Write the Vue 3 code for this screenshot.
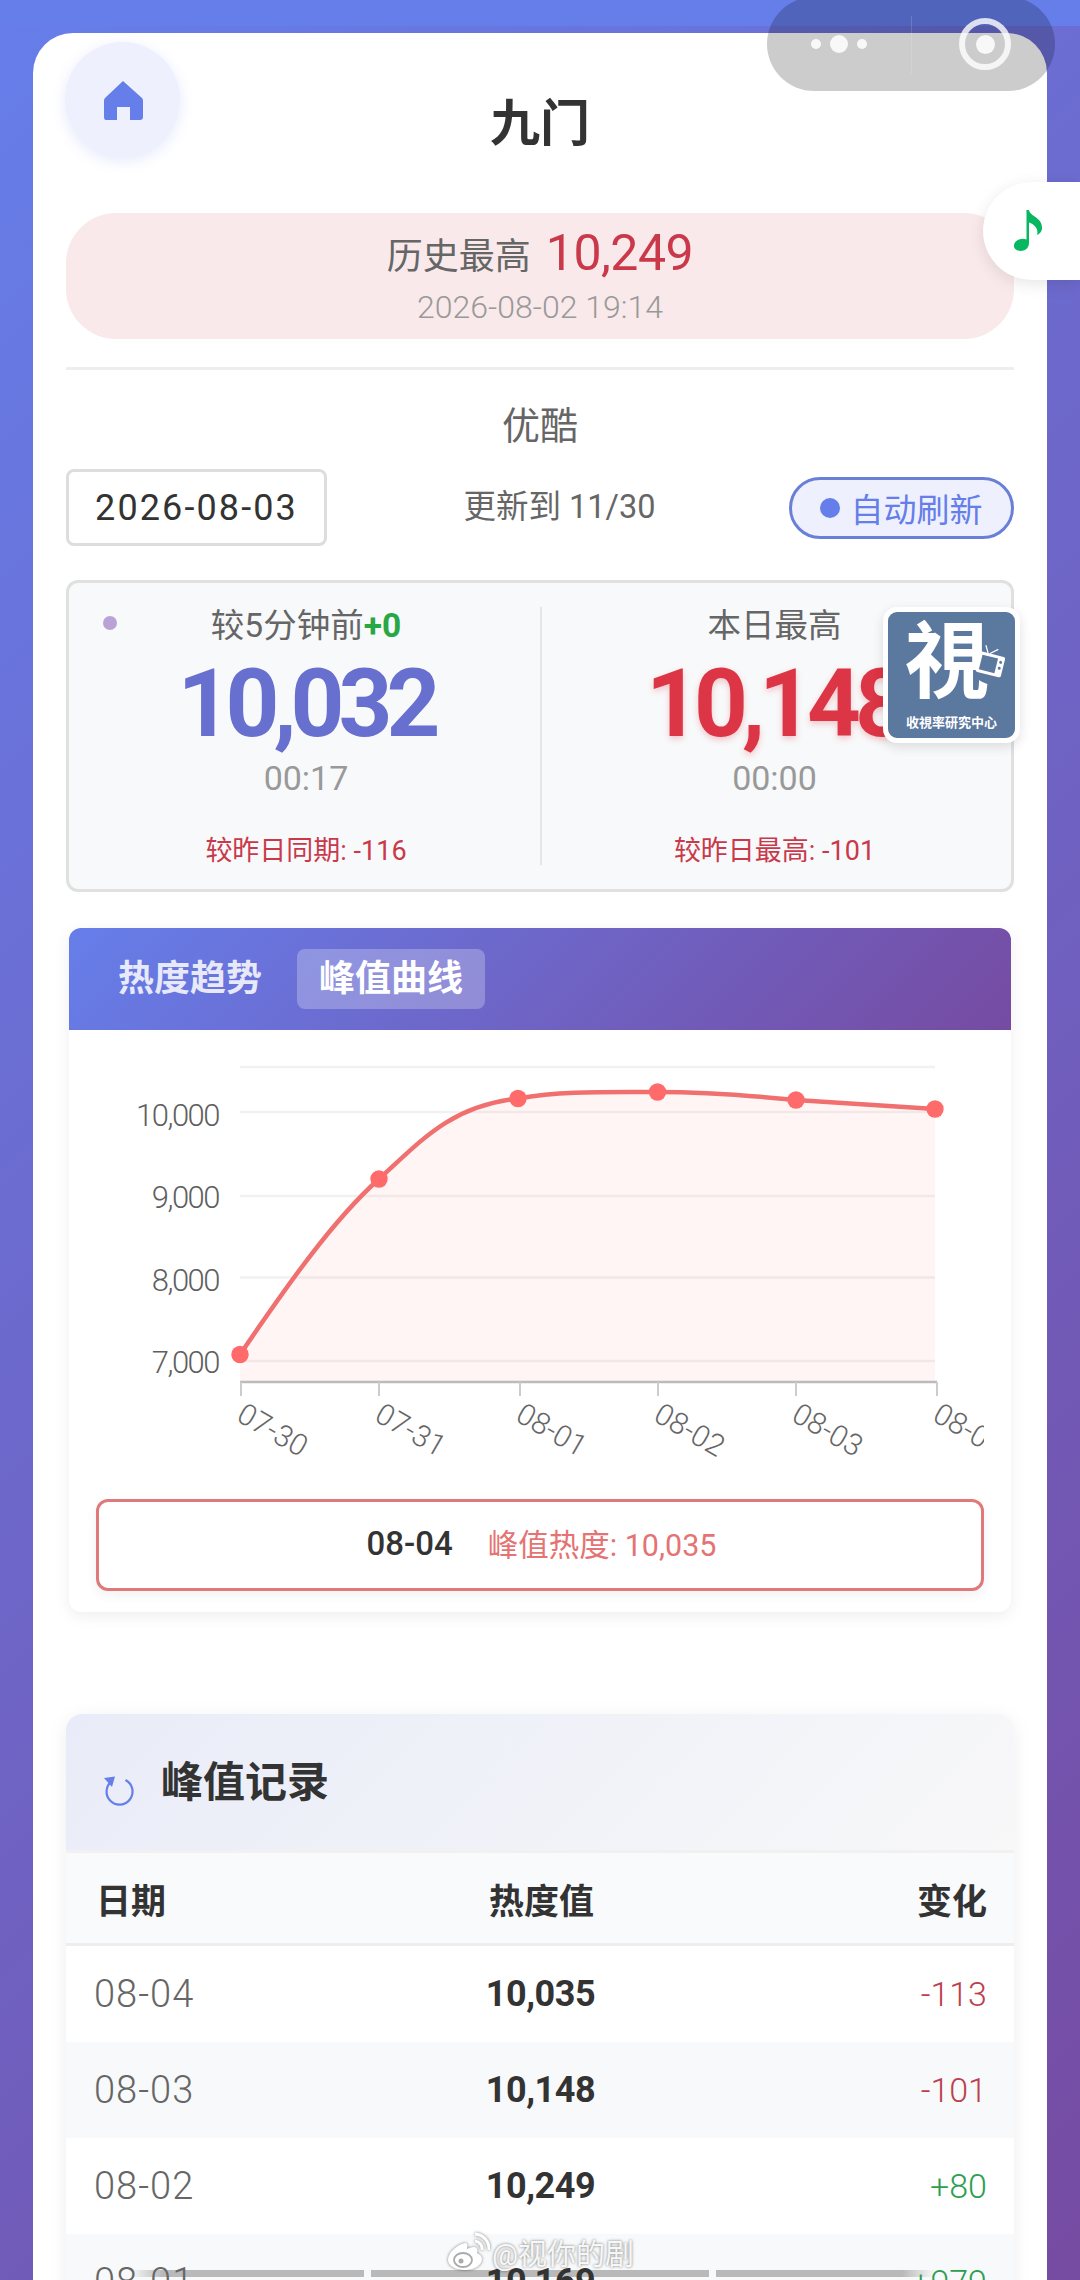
<template>
  <div class="page">
    <!-- top status strip + wechat capsule -->
    <div class="top-strip"></div>
    <div class="capsule">
      <div class="capsule-dots"><i></i><i class="big"></i><i></i></div>
      <div class="capsule-line"></div>
      <div class="capsule-ring"><i></i></div>
    </div>

    <div class="music-btn">
      <svg width="34" height="44" viewBox="0 0 34 44">
        <path d="M15.500 1 L18 1 C19 8 32 8 31 20 C30.500 23 28.500 25 26 26 C27.500 21 25 16 18 13.500 L18 34 C18 39 14 42 9.500 42 C5 42 2.500 39.500 3 36 C3.500 31.500 10 28.500 15.500 30.500 Z" fill="#07b860" />
      </svg>
    </div>

    <div class="main-card">
      <!-- Header -->
      <div class="header">
        <div class="home-btn">
          <svg width="40" height="40" viewBox="0 0 40 40">
            <path d="M20 1 L39 18 Q40 19 40 21 V37 Q40 40 37 40 H27 V27 H14 V40 H3 Q1 40 1 37 V21 Q1 19 2 18 Z" fill="#667eea" />
          </svg>
        </div>
        <h1 class="title">九门</h1>
      </div>

      <!-- All time high -->
      <div class="record-banner">
        <div class="record-line">
          <span class="record-label">历史最高</span>
          <span class="record-value">10,249</span>
        </div>
        <div class="record-time">2026-08-02 19:14</div>
      </div>

      <div class="divider"></div>
      <div class="platform">优酷</div>

      <div class="controls">
        <div class="date-box">2026-08-03</div>
        <div class="update-text">更新到 11/30</div>
        <div class="auto-btn"><i class="auto-dot"></i>自动刷新</div>
      </div>

      <!-- Stats -->
      <div class="stats-card">
        <i class="live-dot"></i>
        <div class="stat-col first">
          <div class="stat-label">较5分钟前<b class="up">+0</b></div>
          <div class="stat-num blue">10,032</div>
          <div class="stat-time">00:17</div>
          <div class="stat-diff">较昨日同期: -116</div>
        </div>
        <div class="stat-col left-line">
          <div class="stat-label">本日最高</div>
          <div class="stat-num red">10,148</div>
          <div class="stat-time">00:00</div>
          <div class="stat-diff">较昨日最高: -101</div>
        </div>
      </div>

      <!-- Chart -->
      <div class="chart-card">
        <div class="chart-tabs">
          <span class="tab">热度趋势</span>
          <span class="tab active">峰值曲线</span>
        </div>
        <div class="chart-body">
          <svg class="chart" width="888" height="440" viewBox="96 1040 888 440">
            <line v-for="y in gridY" :key="y" x1="240" x2="935" :y1="y" :y2="y" stroke="#f1f1f1" stroke-width="2.500" />
            <path :d="linePath + ' L935 1382 L240 1382 Z'" fill="#ff6b6b" fill-opacity="0.07" />
            <line x1="240" x2="937" y1="1382" y2="1382" stroke="#bbb" stroke-width="2.500" />
            <line v-for="t in ticks" :key="t" :x1="t" :x2="t" y1="1382" y2="1396" stroke="#ccc" stroke-width="2" />
            <path :d="linePath" fill="none" stroke="#f07070" stroke-width="4.500" />
            <circle v-for="p in points" :key="p[0]" :cx="p[0]" :cy="p[1]" r="8.700" fill="#ff6b6b" />
            <text v-for="l in yLabels" :key="l.text" x="219" :y="l.y" text-anchor="end" class="axis-y">{{ l.text }}</text>
            <text
              v-for="(l, i) in xLabels"
              :key="l"
              :x="ticks[i] - 6"
              y="1420"
              :transform="`rotate(30 ${ticks[i] - 6} 1420)`"
              class="axis-x"
            >{{ l }}</text>
          </svg>
          <div class="peak-box">
            <span class="peak-date">08-04</span>
            <span class="peak-value">峰值热度: 10,035</span>
          </div>
        </div>
      </div>

      <!-- Records -->
      <div class="records-card">
        <div class="records-head">
          <svg class="refresh-icon" width="32" height="32" viewBox="0 0 32 32">
            <path d="M22.500 5 A13 13 0 1 1 9 6" fill="none" stroke="#667eea" stroke-width="2.200" />
            <path d="M1 3 L12 1.500 L9 12 Z" fill="#667eea" />
          </svg>
          <h2>峰值记录</h2>
        </div>
        <div class="table-row table-head">
          <span>日期</span>
          <span class="center">热度值</span>
          <span class="right">变化</span>
        </div>
        <div v-for="r in rows" :key="r.date" class="table-row">
          <span class="cell-date">{{ r.date }}</span>
          <span class="center cell-value">{{ r.value }}</span>
          <span class="right cell-change" :class="r.change.startsWith('+') ? 'green' : 'dark-red'">{{ r.change }}</span>
          <div v-if="r.date === '08-01'" class="video-bar">
            <i class="seg fade-left"></i>
            <i class="seg mid"></i>
            <i class="seg fade-right"></i>
          </div>
        </div>
      </div>
    </div>

    <!-- station logo floating over stats -->
    <div class="logo">
      <span class="logo-char">視</span>
      <svg class="logo-tv" width="32" height="34" viewBox="0 0 32 34">
        <path d="M11 9 L7 2 M13 9 L20 3" stroke="#fff" stroke-width="1.200" />
        <rect x="3" y="9" width="26" height="21" rx="2" fill="#fff" />
        <rect x="6" y="12" width="16" height="15" fill="#5b789f" />
        <circle cx="25.500" cy="15" r="1.500" fill="#5b789f" />
        <circle cx="25.500" cy="21" r="1.500" fill="#5b789f" />
      </svg>
      <span class="logo-text">收視率研究中心</span>
    </div>

    <!-- watermark -->
    <div class="mark">
      <svg class="mark-icon" width="44" height="40" viewBox="0 0 44 40">
        <path d="M19 11 C10 13 2 21 2 28 C2 34 10 38 19 38 C29 38 36 33 36 27 C36 23 32 22 31 21 C32 18 31 15 28 15 C25 15 23 16 21 17 C22 13 21 11 19 11 Z" fill="#fff" />
        <ellipse cx="17" cy="28" rx="9" ry="7" fill="none" stroke="#aaa" stroke-width="1.800" />
        <circle cx="15" cy="29" r="2.500" fill="#aaa" />
        <path d="M29 9 A8 8 0 0 1 36 18 M29 2 A15 15 0 0 1 43 18" fill="none" stroke="#fff" stroke-width="3" />
      </svg>
      <span>@视你的剧</span>
    </div>
  </div>
</template>

<script setup>
const gridY = [1067, 1112, 1196, 1277.5, 1361]
const ticks = [241, 379, 520, 658, 796, 937]
const points = [[240, 1354.5], [379, 1179], [518, 1098.5], [657.5, 1092], [796, 1100], [935, 1109]]
const linePath = 'M240 1354.500 C286 1287 333 1220 379 1179 C421 1141 450 1106 518 1098.500 C560 1091 600 1092 657.500 1092 C700 1092 745 1095 796 1100 L935 1109'

const yLabels = [
  { text: '10,000', y: 1126 },
  { text: '9,000', y: 1208 },
  { text: '8,000', y: 1291 },
  { text: '7,000', y: 1373 }
]
const xLabels = ['07-30', '07-31', '08-01', '08-02', '08-03', '08-04']

const rows = [
  { date: '08-04', value: '10,035', change: '-113' },
  { date: '08-03', value: '10,148', change: '-101' },
  { date: '08-02', value: '10,249', change: '+80' },
  { date: '08-01', value: '10,169', change: '+979' }
]
</script>

<style>
html, body {
  margin: 0;
  height: 2280px;
  overflow: hidden;
}
</style>

<style scoped>
.page {
  position: relative;
  width: 1080px;
  height: 2280px;
  overflow: hidden;
  padding: 33px 33px 0;
  box-sizing: border-box;
  background: linear-gradient(135deg, #667eea 0%, #764ba2 100%);
  font-family: Roboto, "Noto Sans CJK SC", sans-serif;
  color: #333;
}

.top-strip {
  position: absolute;
  left: 0;
  top: 0;
  width: 100%;
  height: 26px;
  background: #667eea;
}

.capsule {
  position: absolute;
  left: 767px;
  top: -3px;
  width: 288px;
  height: 94px;
  border-radius: 47px;
  background: rgba(0, 0, 0, 0.2);
  z-index: 5;
}

.capsule-dots {
  position: absolute;
  left: 44px;
  top: 38px;
  display: flex;
  align-items: center;
  gap: 9px;
}

.capsule-dots i {
  width: 10px;
  height: 10px;
  border-radius: 50%;
  background: rgba(255, 255, 255, 0.85);
}

.capsule-dots i.big {
  width: 18px;
  height: 18px;
}

.capsule-line {
  position: absolute;
  left: 144px;
  top: 19px;
  width: 1px;
  height: 58px;
  background: rgba(255, 255, 255, 0.15);
}

.capsule-ring {
  position: absolute;
  left: 192px;
  top: 21px;
  width: 40px;
  height: 40px;
  border: 6px solid rgba(255, 255, 255, 0.8);
  border-radius: 50%;
  display: flex;
  align-items: center;
  justify-content: center;
}

.capsule-ring i {
  width: 19px;
  height: 19px;
  border-radius: 50%;
  background: rgba(255, 255, 255, 0.85);
}

.music-btn {
  position: absolute;
  left: 983px;
  top: 182px;
  width: 97px;
  height: 98px;
  border-radius: 49px 0 0 49px;
  background: #fff;
  box-shadow: 0 4px 16px rgba(0, 0, 0, 0.1);
  display: flex;
  align-items: center;
  padding-left: 28px;
  box-sizing: border-box;
  z-index: 4;
}

.main-card {
  position: relative;
  height: 2300px;
  padding: 0 33px;
  box-sizing: border-box;
  background: #fff;
  border-radius: 40px 40px 0 0;
}

/* Header */
.header {
  display: flex;
  justify-content: center;
  position: relative;
  height: 124px;
  padding: 9px 0 0;
  margin-bottom: 47px;
}

.home-btn {
  position: absolute;
  left: -1px;
  top: 9px;
  width: 115px;
  height: 115px;
  border-radius: 50%;
  background: #eef1fd;
  box-shadow: 0 4px 14px rgba(102, 126, 234, 0.16);
  display: flex;
  align-items: center;
  justify-content: center;
}

.title {
  margin: 50px 0 0;
  font-size: 50px;
  line-height: 64px;
  font-weight: 700;
  color: #333;
}

/* All time high */
.record-banner {
  height: 126px;
  border-radius: 50px;
  background: #f9e9eb;
  display: flex;
  flex-direction: column;
  align-items: center;
  justify-content: center;
}

.record-line {
  display: flex;
  align-items: center;
  gap: 15px;
  height: 56px;
}

.record-label {
  font-size: 36px;
  color: #666;
}

.record-value {
  font-size: 50px;
  color: #c9394a;
  letter-spacing: -0.5px;
}

.record-time {
  font-size: 32px;
  line-height: 40px;
  color: #999;
  font-weight: 300;
  margin-top: 6px;
}

.divider {
  height: 3px;
  margin-top: 28px;
  background: #eee;
}

.platform {
  margin-top: 31px;
  font-size: 38px;
  line-height: 50px;
  text-align: center;
  color: #666;
}

/* Controls */
.controls {
  display: flex;
  align-items: center;
  justify-content: space-between;
  margin-top: 18px;
  height: 77px;
}

.date-box {
  width: 261px;
  height: 77px;
  box-sizing: border-box;
  border: 3px solid #ddd;
  border-radius: 8px;
  display: flex;
  align-items: center;
  justify-content: center;
  font-size: 36px;
  letter-spacing: 2.100px;
  color: #333;
}

.update-text {
  font-size: 32.500px;
  line-height: 40px;
  color: #666;
  margin: -2px 0 0 3px;
}

.auto-btn {
  width: 225px;
  height: 62px;
  box-sizing: border-box;
  border: 3px solid #6a80d8;
  border-radius: 31px;
  background: #eef1fd;
  display: flex;
  align-items: center;
  justify-content: center;
  gap: 10px;
  font-size: 33px;
  color: #667eea;
}

.auto-dot {
  width: 20px;
  height: 20px;
  border-radius: 50%;
  background: #667eea;
}

/* Stats */
.stats-card {
  position: relative;
  display: grid;
  grid-template-columns: 1fr 1fr;
  margin-top: 34px;
  padding: 24px 0;
  height: 312px;
  box-sizing: border-box;
  border: 3px solid #e0e0e0;
  border-radius: 12px;
  background: #f8f9fa;
}

.live-dot {
  position: absolute;
  left: 34px;
  top: 33px;
  width: 14px;
  height: 14px;
  border-radius: 50%;
  background: #b9a3d6;
}

.stat-col {
  display: flex;
  flex-direction: column;
  align-items: center;
  height: 258px;
  padding-right: 4px;
  box-sizing: border-box;
}

.stat-col.first {
  padding-left: 3px;
  padding-right: 0;
}

.left-line {
  border-left: 2px solid #e5e5e5;
}

.stat-label {
  font-size: 33.500px;
  line-height: 38px;
  color: #666;
}

.stat-label .up {
  color: #28a745;
  font-weight: 700;
}

.stat-num {
  font-size: 94px;
  line-height: 110px;
  font-weight: 700;
  letter-spacing: -6px;
  margin-top: 4px;
}

.stat-num.blue {
  color: #676fcf;
}

.stat-num.red {
  color: #dc3545;
  text-shadow: 0 3px 6px rgba(220, 53, 69, 0.25);
}

.stat-time {
  font-size: 34px;
  line-height: 44px;
  color: #999;
  margin-top: -3px;
}

.stat-diff {
  margin-top: 35px;
  font-size: 27px;
  line-height: 32px;
  color: #c9394a;
}

/* Chart */
.chart-card {
  margin: 36px 3px 0;
  border-radius: 12px;
  background: #fff;
  box-shadow: 0 4px 16px rgba(0, 0, 0, 0.07);
  overflow: hidden;
}

.chart-tabs {
  height: 102px;
  padding-left: 49px;
  display: flex;
  align-items: center;
  gap: 35px;
  background: linear-gradient(135deg, #667eea 0%, #764ba2 100%);
}

.tab {
  font-size: 36px;
  font-weight: 700;
  line-height: 60px;
  color: rgba(255, 255, 255, 0.85);
  margin-top: -1px;
}

.tab.active {
  height: 60px;
  padding: 0 22px;
  border-radius: 8px;
  background: rgba(255, 255, 255, 0.25);
  color: #fff;
}

.chart-body {
  padding: 10px 27px 21px;
}

.chart {
  display: block;
}

.axis-y {
  font-size: 31px;
  fill: #5f5f5f;
  font-weight: 300;
  letter-spacing: -1.500px;
}

.axis-x {
  font-size: 30px;
  fill: #666;
  font-weight: 300;
}

.peak-box {
  margin-top: 19px;
  height: 92px;
  box-sizing: border-box;
  border: 3px solid #e07a7a;
  border-radius: 12px;
  box-shadow: 0 4px 12px rgba(0, 0, 0, 0.06);
  display: flex;
  align-items: center;
  justify-content: center;
  gap: 35px;
  font-size: 30.500px;
  padding: 0 0 4px 3px;
}

.peak-date {
  font-weight: 500;
  font-size: 33px;
  color: #333;
}

.peak-value {
  color: #e57373;
}

/* Records */
.records-card {
  margin-top: 102px;
  border-radius: 16px 16px 0 0;
  box-shadow: 0 4px 20px rgba(0, 0, 0, 0.07);
  background: #fff;
  overflow: hidden;
}

.records-head {
  height: 139px;
  box-sizing: border-box;
  padding: 0 0 8px 36px;
  display: flex;
  align-items: center;
  background: linear-gradient(135deg, #e9ecf8 0%, #f8f8f9 100%);
  border-bottom: 3px solid #f1f1f1;
}

.refresh-icon {
  margin-top: 26px;
  margin-left: 1px;
}

.records-head h2 {
  margin: 0 0 0 26px;
  font-size: 42px;
  font-weight: 700;
  color: #333;
}

.table-row {
  position: relative;
  display: grid;
  grid-template-columns: 1fr 1fr 1fr;
  align-items: center;
  height: 96px;
  padding: 0 27px 0 28px;
  background: #fff;
}

.table-row span {
  position: relative;
  z-index: 1;
}

.table-row:nth-child(even) {
  background: #f8f9fa;
}

.table-row.table-head {
  height: 93px;
  background: #f9fafb;
  border-bottom: 3px solid #eee;
  font-size: 35px;
  font-weight: 700;
  color: #333;
  box-sizing: border-box;
  padding-left: 30px;
}

.center {
  text-align: center;
}

.right {
  text-align: right;
}

.cell-date {
  font-size: 38px;
  color: #666;
  font-weight: 300;
  letter-spacing: 1px;
}

.cell-value {
  font-size: 36px;
  font-weight: 700;
  color: #333;
  letter-spacing: -0.4px;
}

.cell-change {
  font-size: 34px;
  font-weight: 300;
}

.dark-red {
  color: #bd3f4e;
}

.green {
  color: #2e9e50;
}

/* video progress lying over the last row */
.video-bar {
  position: absolute;
  left: 64px;
  top: 36px;
  display: flex;
  gap: 7px;
}

.seg {
  display: block;
  height: 7px;
  background: #b9b9b9;
}

.seg.fade-left {
  width: 234px;
  background: linear-gradient(90deg, rgba(185, 185, 185, 0), #b9b9b9 14%);
}

.seg.mid {
  width: 338px;
}

.seg.fade-right {
  width: 219px;
  background: linear-gradient(90deg, #b9b9b9 85%, rgba(185, 185, 185, 0));
}

/* Logo */
.logo {
  position: absolute;
  left: 883px;
  top: 607px;
  width: 137px;
  height: 136px;
  box-sizing: border-box;
  border: 5px solid #fff;
  border-radius: 14px;
  background: #5b789f;
  box-shadow: 0 4px 12px rgba(0, 0, 0, 0.12);
  color: #fff;
  z-index: 3;
}

.logo-char {
  position: absolute;
  left: 17px;
  top: -7px;
  font-size: 84px;
  line-height: 100px;
  font-weight: 700;
  font-family: "Noto Sans CJK TC", sans-serif;
}

.logo-tv {
  position: absolute;
  left: 87px;
  top: 33px;
  transform: rotate(14deg);
}

.logo-text {
  position: absolute;
  left: 0;
  right: 0;
  top: 100px;
  text-align: center;
  font-size: 13px;
  font-weight: 700;
  line-height: 20px;
  font-family: "Noto Sans CJK TC", sans-serif;
  white-space: nowrap;
}

/* Watermark */
.mark {
  position: absolute;
  left: 446px;
  top: 2231px;
  display: flex;
  align-items: center;
  gap: 2px;
  font-size: 29px;
  color: rgba(255, 255, 255, 0.92);
  text-shadow: 0 0 3px rgba(0, 0, 0, 0.55);
  z-index: 5;
}

.mark-icon {
  filter: drop-shadow(0 0 1.500px rgba(0, 0, 0, 0.5));
}
</style>
